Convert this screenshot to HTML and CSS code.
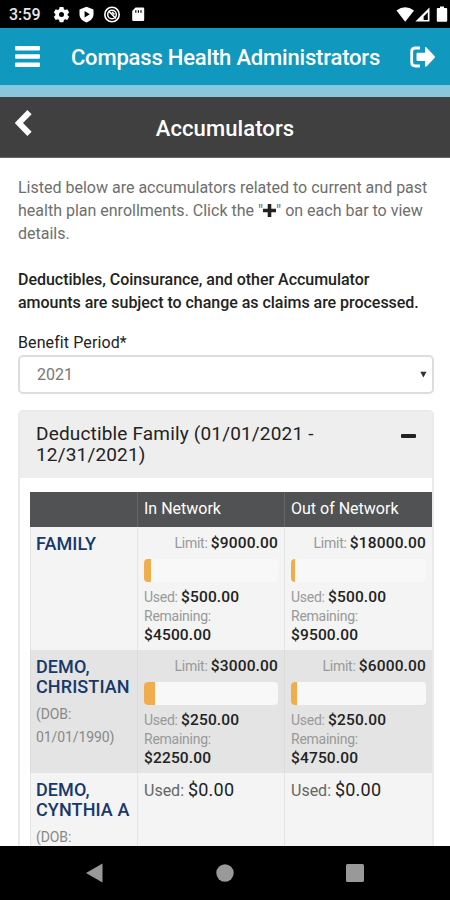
FILE: index.html
```html
<!DOCTYPE html>
<html lang="en">
<head>
    <meta charset="UTF-8">
    <meta name="viewport" content="width=device-width, initial-scale=1.0">
    <title>Compass Health Administrators - Accumulators</title>
    <link rel="stylesheet" href="styles.css">
</head>
<body>
    <!-- Status bar -->
    <div class="status-bar">
        <span class="clock">3:59</span>
        <svg class="status-icons" width="92" height="18" viewBox="0 0 92 18">
            <path fill="#fff" fill-rule="evenodd" d="M5.600 1h3.800l.5 2.200 1.300.7 2.100-.7 1.900 3.200-1.600 1.600v1.200l1.600 1.600-1.900 3.200-2.100-.7-1.300.7-.5 2.200H5.600l-.5-2.200-1.300-.7-2.100.7L-.2 10.800l1.600-1.600V8L-.2 6.400l1.900-3.200 2.100.7 1.300-.7zM7.500 6a2.500 2.500 0 1 0 0 5 2.500 2.500 0 0 0 0-5z"/>
            <path fill="#fff" fill-rule="evenodd" d="M32.500.8l7 2.600v4.800c0 3.800-2.800 6.700-7 8.200-4.200-1.500-7-4.400-7-8.200V3.400zM30.600 5v6.600l5.200-3.300z"/>
            <g fill="none" stroke="#fff">
                <circle cx="58" cy="8.500" r="7.200" stroke-width="1.600"/>
                <circle cx="58" cy="8.500" r="4.300" stroke-width="1.500"/>
                <path d="M54.500 5l7.500 7.500M58 6l2.500 2.500" stroke-width="1.600"/>
            </g>
            <path fill="#fff" fill-rule="evenodd" d="M81.500 1.500H89q1.200 0 1.200 1.200v11.100q0 1.200-1.200 1.200h-9.600q-1.200 0-1.200-1.200V5zM81.200 4.200v2.500h1.200V4.200zm2.600 0v2.500H85V4.200zm2.600 0v2.500h1.200V4.200z"/>
        </svg>
        <svg class="status-signal" width="54" height="18" viewBox="0 0 54 18">
            <path fill="#fff" d="M.5 4.500Q9 -2 18 4.500L9.200 15.700z"/>
            <path fill="#fff" fill-rule="evenodd" d="M33.500 1.500V15.600H19.400zM31.800 6.200v7.700h-4.200v-3.500z"/>
            <path fill="#fff" d="M44 .5h4V2h2.200q1 0 1 1v11.700q0 1-1 1h-8.400q-1 0-1-1V3q0-1 1-1H44z"/>
        </svg>
    </div>

    <!-- App header -->
    <header class="app-header">
        <svg class="menu-icon" width="26" height="22" viewBox="0 0 26 22">
            <path fill="#fff" d="M1 0h23q1 0 1 1v2.500q0 1-1 1H1q-1 0-1-1V1q0-1 1-1zM1 8.200h23q1 0 1 1v2.500q0 1-1 1H1q-1 0-1-1V9.200q0-1 1-1zM1 16.500h23q1 0 1 1V20q0 1-1 1H1q-1 0-1-1v-2.500q0-1 1-1z"/>
        </svg>
        <h1 class="app-title">Compass Health Administrators</h1>
        <svg class="logout-icon" width="26" height="22" viewBox="0 0 26 22">
            <path fill="none" stroke="#fff" stroke-width="2.800" d="M10 2H5.500Q1.700 2 1.700 5.500v11q0 3.500 3.800 3.500H10"/>
            <path fill="#fff" d="M7.500 6.800h7.500V2.200q0-2 1.500-.8l8 8.600q1 1 0 2l-8 8.400q-1.500 1.200-1.500-.8V15H7.500q-1 0-1-1V7.800q0-1 1-1z"/>
        </svg>
    </header>
    <div class="header-strip"></div>

    <!-- Page title -->
    <div class="page-bar">
        <svg class="back-icon" width="18" height="26" viewBox="0 0 18 26">
            <path fill="none" stroke="#fff" stroke-width="6" d="M14.500 2.200L3.900 13l10.600 10.800"/>
        </svg>
        <h2 class="page-title">Accumulators</h2>
    </div>

    <main class="content">
        <p class="intro">Listed below are accumulators related to current and past<br>health plan enrollments. Click the "<svg class="plus-icon" width="13" height="13" viewBox="0 0 13 13"><path fill="#222" d="M4.700 0h3.600v4.700H13v3.600H8.300V13H4.700V8.300H0V4.700h4.700z"/></svg>" on each bar to view<br>details.</p>
        <p class="notice">Deductibles, Coinsurance, and other Accumulator<br>amounts are subject to change as claims are processed.</p>

        <div class="period-label">Benefit Period*</div>
        <div class="period-select">
            <span>2021</span>
            <svg width="7" height="7" viewBox="0 0 7 7"><path fill="#333" d="M.3.700h6.200L3.400 6.500z"/></svg>
        </div>

        <section class="panel">
            <div class="panel-heading">
                <h3 class="panel-title">Deductible Family (01/01/2021 -<br>12/31/2021)</h3>
                <span class="minus-icon"></span>
            </div>
            <div class="panel-body">
                <table class="accumulators">
                    <thead>
                        <tr>
                            <th class="col-name"></th>
                            <th class="col-in">In Network</th>
                            <th>Out of Network</th>
                        </tr>
                    </thead>
                    <tbody>
                        <tr>
                            <td><div class="member">FAMILY</div></td>
                            <td>
                                <div class="limit">Limit: <b>$9000.00</b></div>
                                <div class="progress"><div class="progress-bar" style="width: 5.55%"></div></div>
                                <div class="amount">Used: <b>$500.00</b></div>
                                <div class="amount">Remaining:<br><b>$4500.00</b></div>
                            </td>
                            <td>
                                <div class="limit">Limit: <b>$18000.00</b></div>
                                <div class="progress"><div class="progress-bar" style="width: 2.77%"></div></div>
                                <div class="amount">Used: <b>$500.00</b></div>
                                <div class="amount">Remaining:<br><b>$9500.00</b></div>
                            </td>
                        </tr>
                        <tr class="shaded">
                            <td>
                                <div class="member">DEMO,<br>CHRISTIAN</div>
                                <div class="dob">(DOB:<br>01/01/1990)</div>
                            </td>
                            <td>
                                <div class="limit">Limit: <b>$3000.00</b></div>
                                <div class="progress"><div class="progress-bar" style="width: 8.33%"></div></div>
                                <div class="amount">Used: <b>$250.00</b></div>
                                <div class="amount">Remaining:<br><b>$2250.00</b></div>
                            </td>
                            <td>
                                <div class="limit">Limit: <b>$6000.00</b></div>
                                <div class="progress"><div class="progress-bar" style="width: 4.16%"></div></div>
                                <div class="amount">Used: <b>$250.00</b></div>
                                <div class="amount">Remaining:<br><b>$4750.00</b></div>
                            </td>
                        </tr>
                        <tr>
                            <td>
                                <div class="member">DEMO,<br>CYNTHIA A</div>
                                <div class="dob">(DOB:</div>
                            </td>
                            <td><div class="used-only">Used: <b>$0.00</b></div></td>
                            <td><div class="used-only">Used: <b>$0.00</b></div></td>
                        </tr>
                    </tbody>
                </table>
            </div>
        </section>
    </main>

    <!-- Android navigation -->
    <nav class="nav-bar">
        <svg width="18" height="20" viewBox="0 0 18 20"><path fill="#999" d="M0 10L16.500.500v19z"/></svg>
        <svg width="18" height="20" viewBox="0 0 18 20"><circle cx="9" cy="10" r="8.700" fill="#999"/></svg>
        <svg width="18" height="20" viewBox="0 0 18 20"><rect y="1" width="18" height="18" rx="1.500" fill="#999"/></svg>
    </nav>
</body>
</html>
```

FILE: styles.css
```css
* {
    margin: 0;
    padding: 0;
    box-sizing: border-box;
}

body {
    width: 450px;
    height: 900px;
    display: flex;
    flex-direction: column;
    overflow: hidden;
    background: #fff;
    font-family: Roboto, "Liberation Sans", sans-serif;
    font-size: 16px;
    color: #222;
}

svg {
    display: block;
    flex: none;
}

/* Status bar */
.status-bar {
    flex: none;
    height: 28px;
    padding: 0 8px 0 9px;
    background: #000;
    display: flex;
    align-items: center;
}

.clock {
    width: 45px;
    color: #e8e8e8;
    font-size: 16px;
    font-weight: 500;
    padding-top: 1px;
}

.status-icons {
    margin-top: 2px;
    overflow: visible;
}

.status-signal {
    margin-left: auto;
    margin-right: -8px;
    margin-top: 2px;
}

/* Header */
.app-header {
    flex: none;
    height: 57px;
    padding: 0 14px 0 15px;
    background: #1198be;
    display: flex;
    align-items: center;
    justify-content: space-between;
    color: #fff;
}

.app-title {
    font-size: 22px;
    font-weight: 500;
    letter-spacing: -0.18px;
    padding-top: 1px;
}

.header-strip {
    flex: none;
    height: 12px;
    background: #8ac6dc;
}

.page-bar {
    flex: none;
    height: 61px;
    padding: 0 15px;
    background: #404040;
    border-bottom: 1px solid #666;
    display: grid;
    grid-template-columns: 18px 1fr 18px;
    align-items: center;
    color: #fff;
}

.back-icon {
    margin-top: -9px;
}

.page-title {
    font-size: 22px;
    font-weight: 500;
    letter-spacing: 0.1px;
    text-align: center;
    padding-top: 2px;
}

/* Content */
.content {
    flex: 1;
    min-height: 0;
    overflow: hidden;
    padding: 18px 16px 0 18px;
}

.intro {
    line-height: 23px;
    color: #6e6e6e;
    margin-bottom: 23px;
    white-space: nowrap;
}

.plus-icon {
    display: inline-block;
    vertical-align: -1px;
}

.notice {
    line-height: 23px;
    font-weight: 500;
    letter-spacing: -0.03px;
    color: #222;
    white-space: nowrap;
}

.period-label {
    margin-top: 18px;
    line-height: 22px;
    letter-spacing: 0.1px;
    color: #222;
}

.period-select {
    height: 39px;
    margin-top: 1px;
    padding: 0 5px 0 17px;
    border: 2px solid #ddd;
    border-radius: 5px;
    display: flex;
    align-items: center;
    justify-content: space-between;
    color: #777;
}

/* Accumulator panel */
.panel {
    margin-top: 16px;
    border: 2px solid #eaeaea;
    border-radius: 5px;
}

.panel-heading {
    height: 66px;
    padding: 11px 16px 0 16px;
    background: #eee;
    display: flex;
    justify-content: space-between;
}

.panel-title {
    font-size: 19px;
    font-weight: 400;
    line-height: 21px;
    letter-spacing: 0.17px;
}

.minus-icon {
    width: 15px;
    height: 4px;
    margin-top: 11px;
    border-radius: 1px;
    background: #222;
}

.panel-body {
    padding: 14px 0 0 10px;
}

.accumulators {
    width: 402px;
    border-collapse: separate;
    border-spacing: 0;
    table-layout: fixed;
}

.accumulators th {
    height: 35px;
    padding: 0 6px 2px;
    background: #505254;
    border-left: 1px solid #666;
    color: #fff;
    font-weight: 400;
    text-align: left;
}

.accumulators .col-name {
    width: 107px;
    border-left: 0;
}

.accumulators .col-in {
    width: 147px;
}

.accumulators td {
    height: 123px;
    padding: 5px 6px 0;
    background: #f4f4f4;
    border-left: 1px solid #e4e4e4;
    vertical-align: top;
}

.accumulators td:first-child {
    padding: 7px 0 0 5px;
}

.accumulators .shaded td {
    background: #e4e4e4;
    border-color: #dcdcdc;
}

.accumulators b {
    color: #222;
    font-weight: 500;
}

.member {
    font-size: 18px;
    font-weight: 500;
    line-height: 20px;
    letter-spacing: 0.1px;
    color: #17386b;
}

.dob {
    margin-top: 6px;
    font-size: 14px;
    line-height: 23px;
    letter-spacing: -0.1px;
    color: #888;
}

.limit,
.amount {
    font-size: 14px;
    line-height: 19px;
    letter-spacing: -0.25px;
    color: #999;
}

.limit {
    line-height: 22px;
    text-align: right;
}

.limit b,
.amount b {
    font-size: 15.5px;
    letter-spacing: 0.15px;
}

.progress {
    height: 23px;
    margin: 5px 0 6px;
    border-radius: 4px;
    background: #f8f8f8;
    overflow: hidden;
}

.progress-bar {
    height: 100%;
    background: #f0ad4e;
}

.used-only {
    padding-top: 1px;
    line-height: 22px;
    color: #666;
}

.accumulators .used-only b {
    font-size: 18px;
    font-weight: 400;
    letter-spacing: 0.2px;
}

/* Navigation bar */
.nav-bar {
    flex: none;
    height: 54px;
    padding: 0 86px;
    background: #000;
    display: flex;
    align-items: center;
    justify-content: space-between;
}
```
